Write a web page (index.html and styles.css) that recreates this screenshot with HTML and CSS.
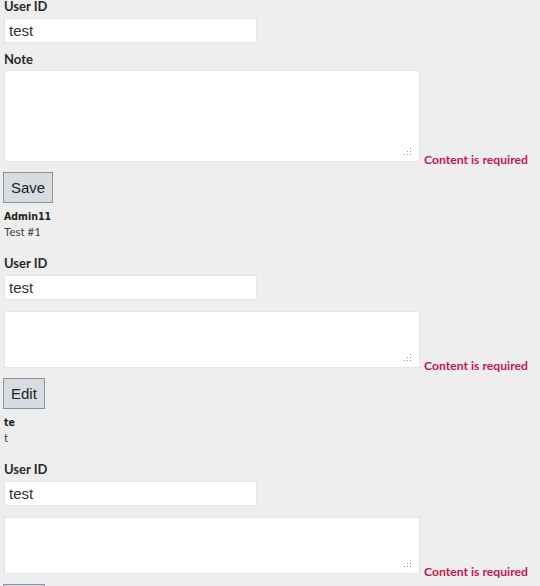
FILE: index.html
```html
<!DOCTYPE html>
<html>
<head>
<meta charset="utf-8">
<link rel="stylesheet" href="styles.css">
</head>
<body>
<div class="page">
  <div class="entry first">
    <div class="label">User ID</div>
    <input class="uid" type="text" value="test">
    <div class="label note-label">Note</div>
    <div class="row">
      <div class="ta-wrap">
        <textarea class="ta tall"></textarea>
        <svg class="grip" width="9" height="9" viewBox="0 0 9 9"><g fill="#9a9a9a"><rect x="7" y="1" width="1" height="1"/><rect x="4" y="4" width="1" height="1"/><rect x="7" y="4" width="1" height="1"/><rect x="1" y="7" width="1" height="1"/><rect x="4" y="7" width="1" height="1"/><rect x="7" y="7" width="1" height="1"/></g></svg>
      </div>
      <span class="err">Content is required</span>
    </div>
    <button class="btn">Save</button>
    <div class="who">Admin11</div>
    <div class="txt">Test #1</div>
  </div>

  <div class="entry">
    <div class="label">User ID</div>
    <input class="uid" type="text" value="test">
    <div class="row">
      <div class="ta-wrap">
        <textarea class="ta"></textarea>
        <svg class="grip" width="9" height="9" viewBox="0 0 9 9"><g fill="#9a9a9a"><rect x="7" y="1" width="1" height="1"/><rect x="4" y="4" width="1" height="1"/><rect x="7" y="4" width="1" height="1"/><rect x="1" y="7" width="1" height="1"/><rect x="4" y="7" width="1" height="1"/><rect x="7" y="7" width="1" height="1"/></g></svg>
      </div>
      <span class="err">Content is required</span>
    </div>
    <button class="btn">Edit</button>
    <div class="who">te</div>
    <div class="txt">t</div>
  </div>

  <div class="entry">
    <div class="label">User ID</div>
    <input class="uid" type="text" value="test">
    <div class="row">
      <div class="ta-wrap">
        <textarea class="ta"></textarea>
        <svg class="grip" width="9" height="9" viewBox="0 0 9 9"><g fill="#9a9a9a"><rect x="7" y="1" width="1" height="1"/><rect x="4" y="4" width="1" height="1"/><rect x="7" y="4" width="1" height="1"/><rect x="1" y="7" width="1" height="1"/><rect x="4" y="7" width="1" height="1"/><rect x="7" y="7" width="1" height="1"/></g></svg>
      </div>
      <span class="err">Content is required</span>
    </div>
    <button class="btn">Edit</button>
    <div class="who">te</div>
    <div class="txt">t</div>
  </div>
</div>
</body>
</html>
```

FILE: styles.css
```css
html, body {
  margin: 0;
  padding: 0;
  background: #eeeeee;
  overflow: hidden;
}
.page {
  padding: 0 4px;
  margin-top: -2px;
  font-family: Lato, "Open Sans", sans-serif;
  color: #222;
}
.entry {
  display: flex;
  flex-direction: column;
  align-items: flex-start;
  padding-bottom: 16px;
}
.label {
  font-weight: bold;
  font-size: 13px;
  line-height: 16px;
  color: #2a2a2a;
  margin-bottom: 4px;
}
.uid {
  box-sizing: border-box;
  width: 253px;
  height: 25px;
  margin: 0 0 11px 0;
  padding: 0 4px;
  border: 1px solid #e6e6e6;
  background: #fff;
  font-family: "Liberation Sans", Arial, sans-serif;
  font-size: 15px;
  color: #333;
  outline: none;
}
.note-label {
  margin-top: -3px;
  margin-bottom: 3px;
}
.row {
  display: flex;
  align-items: flex-end;
}
.ta-wrap {
  position: relative;
  display: flex;
}
.ta {
  box-sizing: border-box;
  width: 416px;
  height: 57px;
  margin: 0;
  border: 1px solid #e6e6e6;
  background: #fff;
  resize: none;
  outline: none;
}
.ta.tall {
  height: 92px;
}
.grip {
  position: absolute;
  right: 8px;
  bottom: 6px;
}
.err {
  margin-left: 4px;
  margin-bottom: -4px;
  font-weight: bold;
  font-size: 12.2px;
  line-height: 12px;
  color: #c4174d;
  white-space: nowrap;
}
.btn {
  box-sizing: border-box;
  height: 31px;
  margin: 10px 0 0 -1px;
  padding: 0 7px;
  border: 1px solid #8c9196;
  border-radius: 0;
  background: #d6dce1;
  font-family: "Liberation Sans", Arial, sans-serif;
  font-size: 15px;
  color: #222;
}
.who {
  margin-top: 6px;
  font-family: "DejaVu Sans Condensed", "DejaVu Sans", sans-serif;
  font-weight: bold;
  font-size: 10.5px;
  line-height: 15px;
  color: #222;
}
.txt {
  font-family: Lato, sans-serif;
  font-size: 11.5px;
  line-height: 15px;
  color: #444;
}
```
